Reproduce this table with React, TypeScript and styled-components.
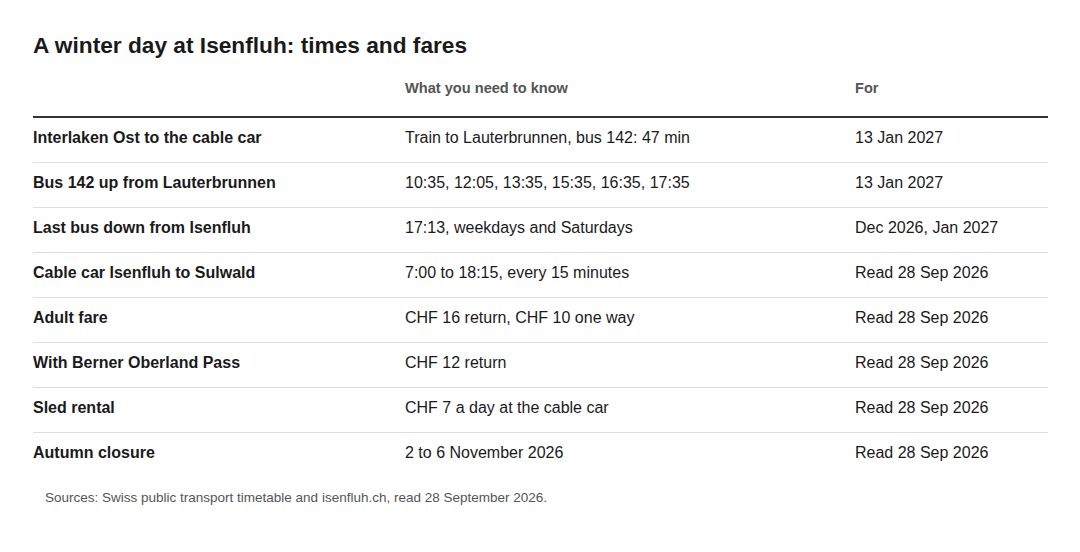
import styled, { createGlobalStyle } from "styled-components";

const Global = createGlobalStyle`
  body {
    margin: 0;
    background: #ffffff;
    font-family: "Liberation Sans", Arial, sans-serif;
    color: #1a1a1a;
  }
`;

const Page = styled.div`
  padding: 30px 32px 0 33px;
`;

const Title = styled.h2`
  margin: 0 0 16px;
  font-size: 22.7px;
  line-height: 30px;
  font-weight: 700;
  color: #1a1a1a;
`;

const Table = styled.table`
  width: 1015px;
  border-collapse: collapse;
  font-size: 16px;
`;

const Head = styled.th<{ $w: number }>`
  width: ${(p) => p.$w}px;
  text-align: left;
  font-weight: 700;
  font-size: 14.6px;
  color: #555555;
  padding: 0 0 16px;
  line-height: 24px;
  border-bottom: 2px solid #333333;
  vertical-align: bottom;
`;

const Row = styled.tr<{ $last?: boolean }>`
  border-bottom: ${(p) => (p.$last ? "none" : "1px solid #dddddd")};
`;

const Cell = styled.td<{ $strong?: boolean }>`
  padding: 8px 12px 12px 0;
  height: 24px;
  line-height: 24px;
  font-weight: ${(p) => (p.$strong ? 700 : 400)};
  color: #1a1a1a;
`;

const Note = styled.p`
  margin: 13px 0 0 12px;
  font-size: 13.5px;
  color: #555555;
`;

const rows = [
  ["Interlaken Ost to the cable car", "Train to Lauterbrunnen, bus 142: 47 min", "13 Jan 2027"],
  ["Bus 142 up from Lauterbrunnen", "10:35, 12:05, 13:35, 15:35, 16:35, 17:35", "13 Jan 2027"],
  ["Last bus down from Isenfluh", "17:13, weekdays and Saturdays", "Dec 2026, Jan 2027"],
  ["Cable car Isenfluh to Sulwald", "7:00 to 18:15, every 15 minutes", "Read 28 Sep 2026"],
  ["Adult fare", "CHF 16 return, CHF 10 one way", "Read 28 Sep 2026"],
  ["With Berner Oberland Pass", "CHF 12 return", "Read 28 Sep 2026"],
  ["Sled rental", "CHF 7 a day at the cable car", "Read 28 Sep 2026"],
  ["Autumn closure", "2 to 6 November 2026", "Read 28 Sep 2026"],
];

export default function App() {
  return (
    <>
      <Global />
      <Page>
        <Title>A winter day at Isenfluh: times and fares</Title>
        <Table>
          <thead>
            <tr>
              <Head $w={372}></Head>
              <Head $w={450}>What you need to know</Head>
              <Head $w={193}>For</Head>
            </tr>
          </thead>
          <tbody>
            {rows.map((r, i) => (
              <Row key={r[0]} $last={i === rows.length - 1}>
                <Cell $strong>{r[0]}</Cell>
                <Cell>{r[1]}</Cell>
                <Cell>{r[2]}</Cell>
              </Row>
            ))}
          </tbody>
        </Table>
        <Note>Sources: Swiss public transport timetable and isenfluh.ch, read 28 September 2026.</Note>
      </Page>
    </>
  );
}
